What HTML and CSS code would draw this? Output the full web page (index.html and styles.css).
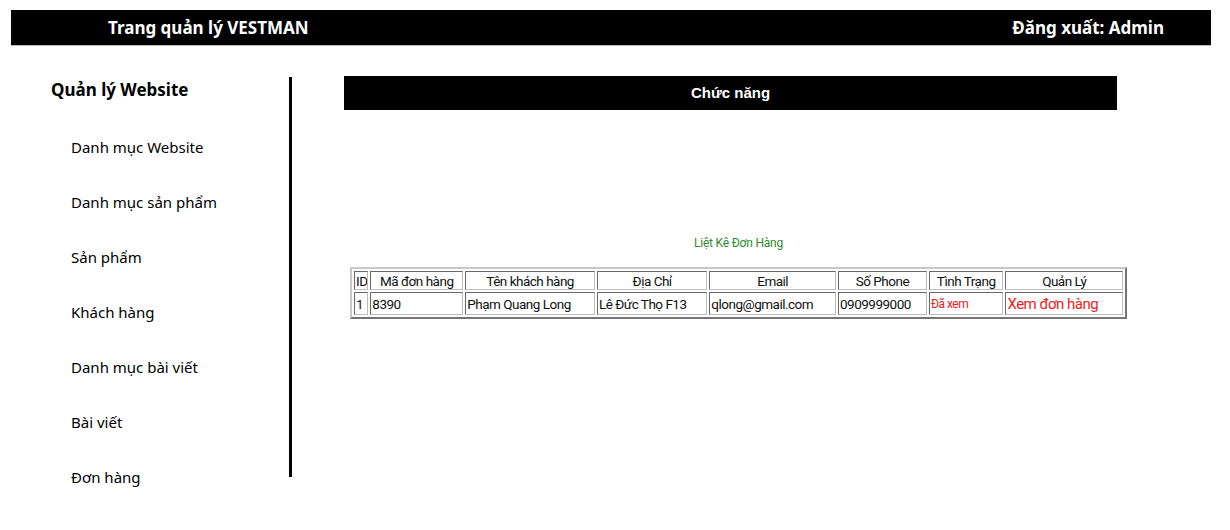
FILE: index.html
```html
<!DOCTYPE html>
<html lang="vi">
<head>
<meta charset="utf-8">
<title>Trang quản lý VESTMAN</title>
<link rel="stylesheet" href="styles.css">
</head>
<body>
<header class="topbar">
  <div class="brand">Trang quản lý VESTMAN</div>
  <div class="logout">Đăng xuất: Admin</div>
</header>
<div class="main">
  <aside class="sidebar">
    <h2 class="side-title">Quản lý Website</h2>
    <ul class="menu">
      <li>Danh mục Website</li>
      <li>Danh mục sản phẩm</li>
      <li>Sản phẩm</li>
      <li>Khách hàng</li>
      <li>Danh mục bài viết</li>
      <li>Bài viết</li>
      <li>Đơn hàng</li>
    </ul>
  </aside>
  <section class="content">
    <div class="func-bar">Chức năng</div>
    <div class="orders">
      <div class="orders-title">Liệt Kê Đơn Hàng</div>
      <table class="grid">
        <colgroup>
          <col class="c-id"><col class="c-ma"><col class="c-ten"><col class="c-dc"><col class="c-em"><col class="c-ph"><col class="c-tt"><col class="c-ql">
        </colgroup>
        <tr class="head">
          <td>ID</td><td>Mã đơn hàng</td><td>Tên khách hàng</td><td>Địa Chỉ</td><td>Email</td><td>Số Phone</td><td>Tình Trạng</td><td>Quản Lý</td>
        </tr>
        <tr class="row">
          <td>1</td><td>8390</td><td>Phạm Quang Long</td><td>Lê Đức Thọ F13</td><td>qlong@gmail.com</td><td>0909999000</td><td class="seen">Đã xem</td><td class="view">Xem đơn hàng</td>
        </tr>
      </table>
    </div>
  </section>
</div>
</body>
</html>
```
FILE: styles.css
```css
* { box-sizing: border-box; }
body {
  margin: 0;
  padding: 10px 19px 0 11px;
  background: #fff;
  font-family: "Noto Sans", "Lato", sans-serif;
  color: #000;
}
.topbar {
  height: 36px;
  background: #000;
  color: #fff;
  display: flex;
  align-items: center;
  justify-content: space-between;
  padding: 0 47px 0 97px;
  font-weight: 700;
  font-size: 17px;
  border-bottom: 1px solid #bbb;
}
.main {
  display: flex;
  margin-top: 31px;
}
.sidebar {
  width: 278px;
  flex: none;
  padding-left: 40px;
}
.side-title {
  margin: 2px 0 0;
  font-size: 17px;
  font-weight: 700;
  line-height: 22px;
  height: 22px;
}
.menu {
  list-style: none;
  margin: 0;
  padding: 37px 0 0 20px;
  font-size: 15px;
}
.menu li {
  height: 55px;
  line-height: 18px;
}
.content {
  flex: none;
  width: 840px;
  padding-left: 52px;
  border-left: 3px solid #000;
  height: 400px;
}
.func-bar {
  margin-top: -1px;
  width: 773px;
  height: 34px;
  background: #000;
  color: #fff;
  font-weight: 700;
  font-size: 15px;
  text-align: center;
  line-height: 34px;
  font-family: "Liberation Sans", Arial, sans-serif;
}
.orders {
  margin-left: 6px;
  width: 777px;
  padding-top: 126px;
}
.orders-title {
  text-align: center;
  color: #2e8b2e;
  font-family: "Roboto", sans-serif;
  font-size: 12px;
  letter-spacing: -0.2px;
  height: 31px;
}
.grid {
  width: 777px;
  border: 2px outset #c8c8c8;
  border-spacing: 2px;
  font-family: "Roboto", sans-serif;
  font-size: 13.5px;
  letter-spacing: -0.5px;
  color: #111;
  table-layout: fixed;
}
.grid td {
  border: 1px inset #bdbdbd;
  padding: 0 1px;
  white-space: nowrap;
  overflow: hidden;
}
.head td { text-align: center; height: 19px; }
.row td { height: 23px; }
.c-id { width: 14px; }
.c-ma { width: 91px; }
.c-ten { width: 127px; }
.c-dc { width: 108px; }
.c-em { width: 124px; }
.c-ph { width: 87px; }
.c-tt { width: 73px; }
.c-ql { width: 115px; }
.seen { color: #f01c1c; font-size: 12px; }
.view { color: #f01c1c; font-size: 15px; }
```
